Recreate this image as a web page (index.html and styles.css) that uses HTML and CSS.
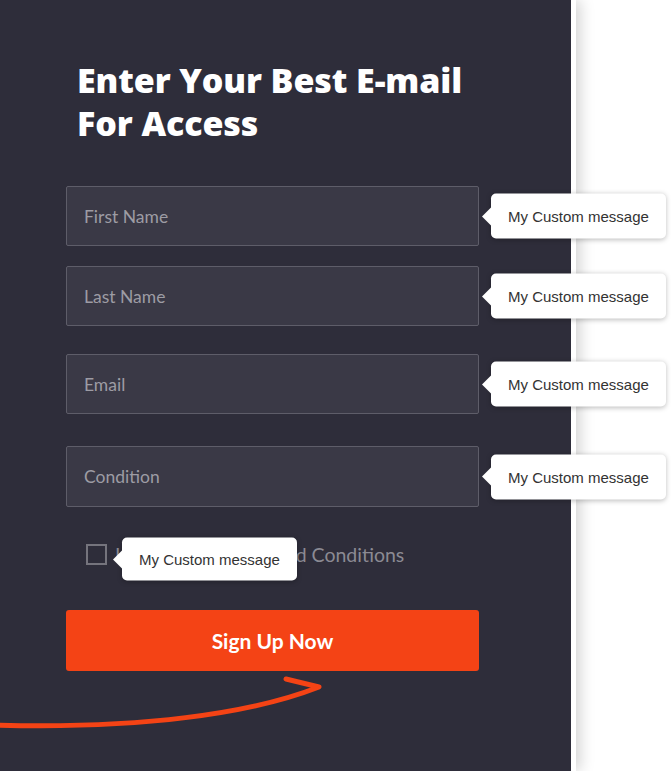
FILE: index.html
```html
<!DOCTYPE html>
<html lang="en">
<head>
  <meta charset="UTF-8" />
  <meta name="viewport" content="width=device-width, initial-scale=1.0"/>
  <title>Sign Up</title>
  <link rel="stylesheet" href="styles.css">
</head>
<body>

  <div class="panel">
    <h1>Enter Your Best E-mail<br>For Access</h1>

    <form class="form">
      <div class="field f1">
        <input type="text" placeholder="First Name" />
        <span class="tip">My Custom message</span>
      </div>
      <div class="field f2">
        <input type="text" placeholder="Last Name" />
        <span class="tip">My Custom message</span>
      </div>
      <div class="field f3">
        <input type="email" placeholder="Email" />
        <span class="tip">My Custom message</span>
      </div>
      <div class="field f4">
        <input type="text" placeholder="Condition" />
        <span class="tip">My Custom message</span>
      </div>

      <label class="check">
        <span class="box"></span>
        <span class="label">I accept the Terms and Conditions</span>
        <span class="tip small">My Custom message</span>
      </label>

      <button type="button" class="submit">Sign Up Now</button>
    </form>

    <svg class="arrow" width="330" height="60" viewBox="0 0 330 60">
      <path d="M286 7 L319 15 C250 42 140 57 -5 53" fill="none" stroke="#f44315" stroke-width="5" stroke-linecap="round" stroke-linejoin="round"/>
    </svg>
  </div>

</body>
</html>
```

FILE: styles.css
```css
body {
  margin: 0;
  background: #fff;
  font-family: "Lato", "Noto Sans", sans-serif;
}
.panel {
  position: relative;
  width: 571px;
  height: 771px;
  background: #2e2d3a;
  box-shadow: 5px 0 0 #fff, 9px 0 14px rgba(0,0,0,0.18);
  padding-top: 59px;
  box-sizing: border-box;
}
h1 {
  margin: 0 0 41px 77px;
  color: #fff;
  font-family: "Open Sans", "Lato", sans-serif;
  font-size: 34px;
  line-height: 43px;
  font-weight: 800;
  letter-spacing: -0.1px;
}
.form {
  padding-left: 66px;
  width: 413px;
}
.field {
  position: relative;
}
.f2 { margin-top: 20px; }
.f3 { margin-top: 28px; }
.f4 { margin-top: 32px; }
.field input {
  display: block;
  width: 100%;
  height: 60px;
  box-sizing: border-box;
  padding: 0 17px;
  background: #3a3946;
  border: 1px solid #5e5d69;
  border-radius: 2px;
  color: #ddd;
  font-family: inherit;
  font-size: 17.5px;
}
.f4 input { height: 61px; }
.field input::placeholder {
  color: #9d9ca4;
}
.tip {
  position: absolute;
  left: 425px;
  top: 50%;
  transform: translateY(-50%);
  height: 45px;
  line-height: 45px;
  padding: 0 17px;
  background: #fff;
  border-radius: 5px;
  box-shadow: 0 1px 5px rgba(0,0,0,0.25);
  color: #333;
  font-family: "Liberation Sans", Arial, sans-serif;
  font-size: 15px;
  white-space: nowrap;
}
.tip::before {
  content: "";
  position: absolute;
  left: -9px;
  top: 50%;
  margin-top: -9px;
  border-style: solid;
  border-width: 9px 9px 9px 0;
  border-color: transparent #fff transparent transparent;
}
.check {
  position: relative;
  display: flex;
  align-items: center;
  gap: 8px;
  margin: 37px 0 0 20px;
  height: 21px;
}
.box {
  width: 21px;
  height: 21px;
  box-sizing: border-box;
  border: 2px solid #75747d;
}
.label {
  color: #8b8a93;
  font-size: 19.5px;
  white-space: nowrap;
}
.tip.small {
  left: 36px;
  top: 15px;
  height: 43px;
  line-height: 43px;
}
.submit {
  display: block;
  width: 100%;
  height: 61px;
  margin-top: 45px;
  background: #f44315;
  border: none;
  border-radius: 3px;
  color: #fff;
  font-family: inherit;
  font-size: 21px;
  font-weight: 700;
}
.arrow {
  position: absolute;
  left: 0;
  top: 672px;
}
```
